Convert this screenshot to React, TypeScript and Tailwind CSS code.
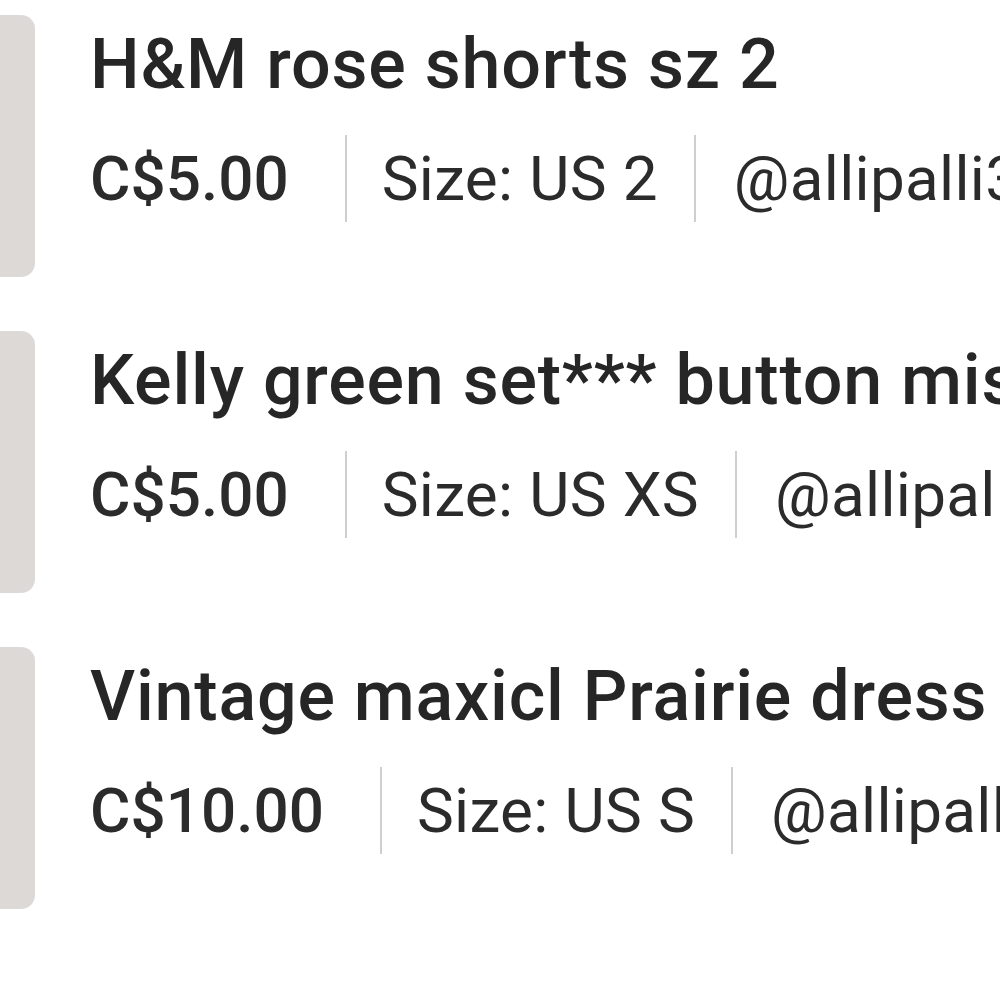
import React from "react";

const items = [
  { title: "H&M rose shorts sz 2", price: "C$5.00", size: "Size: US 2", user: "@allipalli3" },
  { title: "Kelly green set*** button missing", price: "C$5.00", size: "Size: US XS", user: "@allipalli3" },
  { title: "Vintage maxicl Prairie dress", price: "C$10.00", size: "Size: US S", user: "@allipalli3" },
];

export default function App() {
  return (
    <div
      className="w-[1000px] h-[1000px] overflow-hidden bg-white pt-[15px] flex flex-col gap-[54px]"
      style={{ fontFamily: "Roboto, 'Noto Sans', sans-serif" }}
    >
      {items.map((it) => (
        <div key={it.title} className="flex gap-[55px] whitespace-nowrap">
          <div className="w-[35px] h-[262px] shrink-0 rounded-r-[14px] bg-[#dcd9d7]" />
          <div className="flex flex-col">
            <div className="text-[70px] leading-[98px] font-medium tracking-[0.78px] text-[#262626]">{it.title}</div>
            <div className="mt-[22px] h-[87px] flex items-stretch text-[62px] leading-[87px] text-[#2b2b2b]">
              <span className="font-medium pr-[56px]">{it.price}</span>
              <span className="w-[2px] bg-[#cfcfcf]" />
              <span className="pl-[35px] pr-[36px] tracking-[0.35px]">{it.size}</span>
              <span className="w-[2px] bg-[#cfcfcf]" />
              <span className="pl-[38px] tracking-[0.3px]">{it.user}</span>
            </div>
          </div>
        </div>
      ))}
    </div>
  );
}
